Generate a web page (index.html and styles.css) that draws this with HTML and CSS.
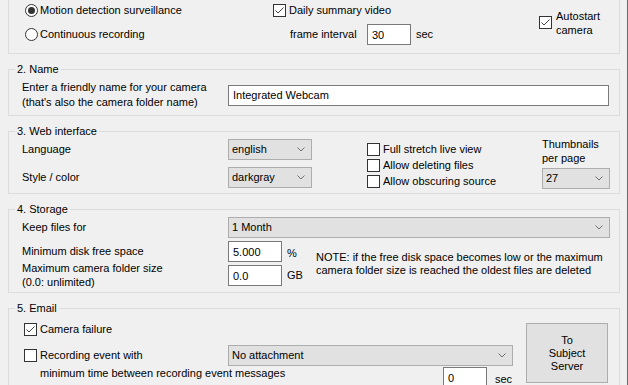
FILE: index.html
```html
<!DOCTYPE html>
<html lang="en">
<head>
    <meta charset="UTF-8">
    <title>Camera Settings</title>
    <link rel="stylesheet" href="styles.css">
</head>
<body>
    <div class="window">
        <!-- 1. Mode (top cut off) -->
        <div class="group group-top">
            <div class="mode-grid">
                <label class="opt">
                    <span class="radio checked"></span>Motion detection surveillance
                </label>
                <label class="opt">
                    <span class="check checked"><svg viewBox="0 0 11 11"><polyline points="1.5,5.5 4,8 9.5,2.5"/></svg></span>Daily summary video
                </label>
                <label class="opt autostart">
                    <span class="check checked"><svg viewBox="0 0 11 11"><polyline points="1.5,5.5 4,8 9.5,2.5"/></svg></span>
                    <span class="two-lines">Autostart<br>camera</span>
                </label>
                <label class="opt">
                    <span class="radio"></span>Continuous recording
                </label>
                <div class="opt frame">
                    <span class="frame-label">frame interval</span>
                    <input class="field field-sm" type="text" value="30">
                    <span class="unit">sec</span>
                </div>
            </div>
        </div>

        <!-- 2. Name -->
        <fieldset class="group">
            <legend>2. Name</legend>
            <div class="name-row">
                <span class="label-col">Enter a friendly name for your camera<br>(that's also the camera folder name)</span>
                <input class="field field-name" type="text" value="Integrated Webcam">
            </div>
        </fieldset>

        <!-- 3. Web interface -->
        <fieldset class="group">
            <legend>3. Web interface</legend>
            <div class="web-row">
                <div class="web-grid">
                    <span>Language</span>
                    <div class="select select-sm"><span>english</span><svg viewBox="0 0 8 5"><polyline points="0.5,0.5 4,4 7.5,0.5"/></svg></div>
                    <span>Style / color</span>
                    <div class="select select-sm"><span>darkgray</span><svg viewBox="0 0 8 5"><polyline points="0.5,0.5 4,4 7.5,0.5"/></svg></div>
                </div>
                <div class="web-checks">
                    <label class="opt"><span class="check"></span>Full stretch live view</label>
                    <label class="opt"><span class="check"></span>Allow deleting files</label>
                    <label class="opt"><span class="check"></span>Allow obscuring source</label>
                </div>
                <div class="thumbs">
                    <span class="thumbs-label">Thumbnails<br>per page</span>
                    <div class="select select-thumb"><span>27</span><svg viewBox="0 0 8 5"><polyline points="0.5,0.5 4,4 7.5,0.5"/></svg></div>
                </div>
            </div>
        </fieldset>

        <!-- 4. Storage -->
        <fieldset class="group">
            <legend>4. Storage</legend>
            <div class="storage-grid">
                <span>Keep files for</span>
                <div class="select select-wide"><span>1 Month</span><svg viewBox="0 0 8 5"><polyline points="0.5,0.5 4,4 7.5,0.5"/></svg></div>
                <span>Minimum disk free space</span>
                <input class="field field-num" type="text" value="5.000">
                <span class="unit pct">%</span>
                <span class="note">NOTE: if the free disk space becomes low or the maximum<br>camera folder size is reached the oldest files are deleted</span>
                <span class="tall-label">Maximum camera folder size<br>(0.0: unlimited)</span>
                <input class="field field-num" type="text" value="0.0">
                <span class="unit">GB</span>
            </div>
        </fieldset>

        <!-- 5. Email -->
        <fieldset class="group">
            <legend>5. Email</legend>
            <div class="email-row">
                <div class="email-left">
                    <label class="opt email-line"><span class="check checked"><svg viewBox="0 0 11 11"><polyline points="1.5,5.5 4,8 9.5,2.5"/></svg></span>Camera failure</label>
                    <div class="email-line event-line">
                        <label class="opt event-label"><span class="check"></span>Recording event with</label>
                        <div class="select select-attach"><span>No attachment</span><svg viewBox="0 0 8 5"><polyline points="0.5,0.5 4,4 7.5,0.5"/></svg></div>
                    </div>
                    <div class="email-line min-line">
                        <span class="min-label">minimum time between recording event messages</span>
                        <input class="field field-sm" type="text" value="0">
                        <span class="unit sec">sec</span>
                    </div>
                </div>
                <button class="subject-btn">To<br>Subject<br>Server</button>
            </div>
        </fieldset>
    </div>
</body>
</html>
```

FILE: styles.css
```css
body {
    margin: 0;
    background: #f0f0f0;
    font-family: "Liberation Sans", Arial, sans-serif;
    font-size: 11px;
    color: #000;
}

.window {
    width: 628px;
    height: 385px;
    overflow: hidden;
    border-right: 1px solid #6a6a6a;
    box-sizing: border-box;
    line-height: 15px;
}

.group {
    box-sizing: border-box;
    width: 612px;
    margin: 8px 0 0 8px;
    padding: 0;
    border: 1px solid #dcdcdc;
    min-width: 0;
}

.group legend {
    margin-left: 6px;
    padding: 0 2px;
    line-height: 14px;
}

.group-top {
    margin-top: 0;
    border-top: none;
    padding: 0 0 8px 16px;
}

/* checkbox + radio */
.opt {
    display: flex;
    align-items: center;
}

.check,
.radio {
    flex: none;
    box-sizing: border-box;
    width: 13px;
    height: 13px;
    border: 1px solid #333;
    background: #fff;
    margin-right: 3px;
    display: flex;
    align-items: center;
    justify-content: center;
}

.check svg {
    width: 11px;
    height: 11px;
    fill: none;
    stroke: #444;
    stroke-width: 1;
}

.radio {
    border-radius: 50%;
    margin-right: 2px;
}

.radio.checked::after {
    content: "";
    width: 7px;
    height: 7px;
    border-radius: 50%;
    background: #333;
}

/* inputs and combos */
.field {
    box-sizing: border-box;
    height: 21px;
    border: 1px solid #7a7a7a;
    background: #fff;
    padding: 0 4px;
    font: inherit;
    color: #000;
    outline: none;
}

.field-sm {
    width: 44px;
}

.select {
    box-sizing: border-box;
    height: 21px;
    border: 1px solid #adadad;
    background: #e1e1e1;
    display: flex;
    align-items: center;
    justify-content: space-between;
    padding: 0 6px 0 3px;
}

.select svg {
    width: 8px;
    height: 5px;
    fill: none;
    stroke: #707070;
    stroke-width: 1;
}

.unit {
    margin-left: 5px;
}

/* 1 */
.mode-grid {
    display: grid;
    grid-template-columns: 248px 266px 1fr;
    grid-template-rows: 21px 21px;
    row-gap: 3px;
}

.autostart {
    grid-column: 3;
    grid-row: 1 / 3;
}

.two-lines {
    line-height: 14px;
    margin-left: 1px;
}

.frame {
    padding-left: 17px;
}

.frame-label {
    width: 77px;
}

/* 2 */
.name-row {
    display: flex;
    align-items: center;
    padding: 4px 10px 5px 13px;
}

.label-col {
    width: 206px;
}

.field-name {
    width: 381px;
}

/* 3 */
.web-row {
    display: flex;
    padding: 1px 0 4px 13px;
}

.web-grid {
    display: grid;
    grid-template-columns: 206px 84px;
    grid-template-rows: 21px 21px;
    row-gap: 7px;
    align-items: center;
}

.web-checks {
    width: 175px;
    margin: 2px 0 0 55px;
}

.web-checks .opt {
    height: 16px;
}

.thumbs {
    display: flex;
    flex-direction: column;
    margin-top: -2px;
}

.thumbs-label {
    line-height: 14px;
    margin-bottom: 3px;
}

.select-thumb {
    width: 68px;
}

/* 4 */
.storage-grid {
    display: grid;
    grid-template-columns: 206px 54px 34px 1fr;
    grid-template-rows: 21px 21px 21px;
    row-gap: 3px;
    align-items: center;
    padding: 1px 0 6px 13px;
}

.select-wide {
    grid-column: 2 / 5;
    width: 382px;
}

.field-num {
    width: 54px;
}

.pct {
    margin-top: 3px;
}

.note {
    grid-row: 2 / 4;
    grid-column: 4;
    line-height: 13px;
}

.tall-label {
    line-height: 14px;
    margin: -4px 0 -3px;
}

/* 5 */
.email-row {
    display: flex;
    padding: 4px 0 0 15px;
}

.email-left {
    width: 489px;
    flex: none;
}

.email-line {
    height: 20px;
}

.event-line {
    display: flex;
    align-items: center;
    margin-top: 6px;
    height: 21px;
}

.event-label {
    width: 204px;
}

.select-attach {
    width: 285px;
}

.min-line {
    display: flex;
    align-items: flex-start;
    margin-top: 1px;
    height: 21px;
}

.min-label {
    width: 419px;
    padding-left: 16px;
    box-sizing: border-box;
    margin-top: -1px;
}

.sec {
    margin: 5px 0 0 8px;
}

.subject-btn {
    flex: none;
    box-sizing: border-box;
    width: 82px;
    height: 60px;
    margin: 4px 0 0 13px;
    border: 1px solid #adadad;
    background: #e1e1e1;
    font: inherit;
    line-height: 13px;
    color: #000;
    padding: 0;
}
```
